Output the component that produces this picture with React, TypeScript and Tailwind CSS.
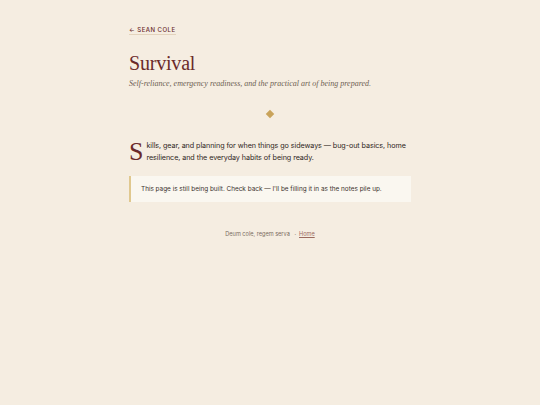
export default function App() {
  return (
    <div className="min-h-[405px] w-full bg-[#f5ede1] font-['Inter',sans-serif]">
      <main className="mx-auto w-[282px] pt-[25px]">
        <div className="flex">
          <a href="#" className="border-b border-[#e3d3bd] text-[6px] font-medium uppercase leading-[9px] tracking-[0.08em] text-[#6b2a2a]">
            ← Sean Cole
          </a>
        </div>

        <h1 className="mt-[16px] font-['Liberation_Serif',serif] text-[20px] leading-[24px] tracking-[-0.01em] text-[#6b2a2a]">
          Survival
        </h1>
        <p className="mt-[3px] font-['Liberation_Serif',serif] text-[8px] italic leading-[11px] text-[#6e5e52]">
          Self-reliance, emergency readiness, and the practical art of being prepared.
        </p>

        <div className="mt-[22px] flex justify-center">
          <div className="h-[6px] w-[6px] rotate-45 bg-[#c9a35a]" />
        </div>

        <p className="mt-[23px] text-[7.2px] leading-[11.5px] tracking-[-0.01em] text-[#2e2522]">
          <span className="float-left mr-[3px] mt-[2px] font-['Liberation_Serif',serif] text-[26px] leading-[20px] tracking-normal text-[#6b2a2a]">
            S
          </span>
          kills, gear, and planning for when things go sideways — bug-out basics, home resilience, and the everyday habits of being ready.
        </p>

        <div className="mt-[13px] border-l-2 border-[#e0c88f] bg-[#faf7f0] px-[10px] py-[8px] text-[6.4px] leading-[10px] text-[#3b322d]">
          This page is still being built. Check back — I'll be filling it in as the notes pile up.
        </div>

        <footer className="mt-[28px] text-center text-[5.6px] leading-[8px] text-[#7a6c60]">
          Deum cole, regem serva <span className="mx-[3px]">·</span>
          <a href="#" className="text-[#9a6a5e] underline">Home</a>
        </footer>
      </main>
    </div>
  )
}
